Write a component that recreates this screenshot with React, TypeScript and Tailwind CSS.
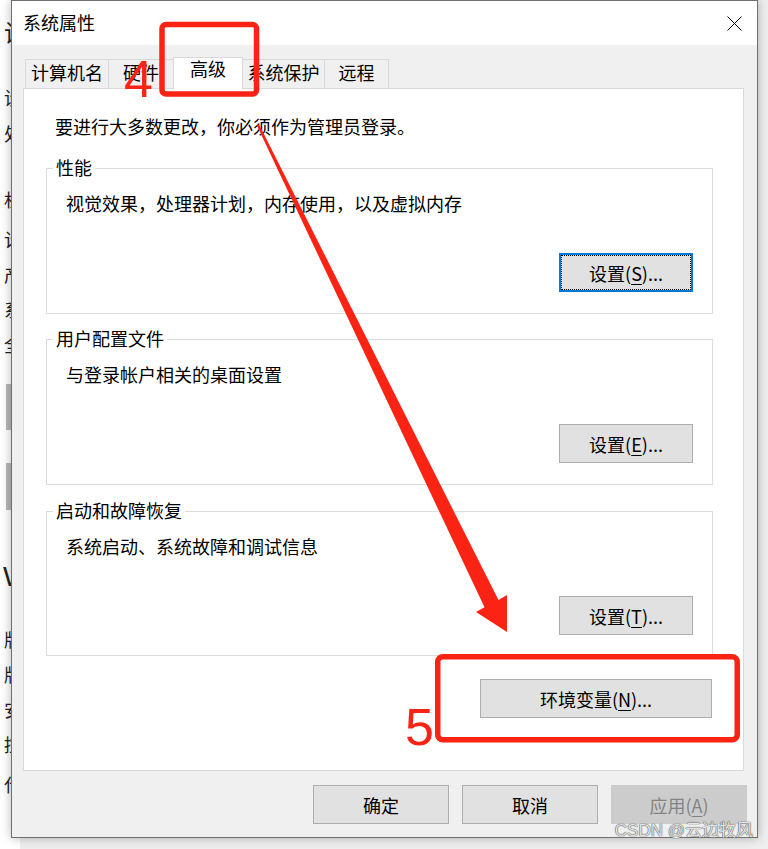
import React from "react";

type BtnProps = {
  label: string;
  mn?: string;
  tail?: string;
  className?: string;
  focused?: boolean;
  disabled?: boolean;
};

function Btn({ label, mn, tail = "", className = "", focused = false, disabled = false }: BtnProps) {
  const look = disabled
    ? "bg-[#cccccc] border border-[#cccccc] text-[#838383]"
    : focused
    ? "bg-[#e1e1e1] border-2 border-[#0078d7] outline outline-1 outline-dotted outline-black -outline-offset-3"
    : "bg-[#e1e1e1] border border-[#adadad]";
  return (
    <div className={`h-[39px] flex items-center justify-center leading-[24px] whitespace-nowrap ${look} ${className}`}>
      <span>{label}</span>
      {mn ? (
        <>
          <span>(</span>
          <span className="underline underline-offset-[3px] decoration-1">{mn}</span>
          <span>)</span>
        </>
      ) : null}
      {tail ? <span>{tail}</span> : null}
    </div>
  );
}

type GroupProps = {
  title: string;
  desc: string;
  btn: React.ReactNode;
  className?: string;
};

function Group({ title, desc, btn, className = "" }: GroupProps) {
  return (
    <div className={`relative w-[667px] border border-[#dcdcdc] ${className}`}>
      <span className="absolute left-[6px] -top-[12px] px-[3px] leading-[20px] bg-white">{title}</span>
      <div className="pt-[22px] pl-[19px] leading-[24px]">{desc}</div>
      <div className="mt-[38px] flex justify-end pr-[19px]">{btn}</div>
    </div>
  );
}

function BackWindow() {
  return (
    <div className="absolute left-0 top-0 w-[20px] h-[849px] bg-white overflow-hidden text-[#222]">
      <div className="absolute left-[4px] top-[18px] text-[24px] leading-[28px]">设</div>
      <div className="absolute left-[4px] top-[86px] leading-[22px]">设</div>
      <div className="absolute left-[4px] top-[122px] leading-[22px]">处</div>
      <div className="absolute left-[4px] top-[188px] leading-[22px]">机</div>
      <div className="absolute left-[4px] top-[228px] leading-[22px]">计</div>
      <div className="absolute left-[4px] top-[263px] leading-[22px]">产</div>
      <div className="absolute left-[4px] top-[298px] leading-[22px]">系</div>
      <div className="absolute left-[4px] top-[333px] leading-[22px]">全</div>
      <div className="absolute left-[6px] top-[384px] w-[10px] h-[46px] bg-[#b9b9b9]" />
      <div className="absolute left-[6px] top-[463px] w-[10px] h-[47px] bg-[#b9b9b9]" />
      <div className="absolute left-[3px] top-[560px] text-[28px] leading-[34px] font-['Liberation_Sans',sans-serif]">W</div>
      <div className="absolute left-[4px] top-[628px] leading-[22px]">版</div>
      <div className="absolute left-[4px] top-[663px] leading-[22px]">版</div>
      <div className="absolute left-[4px] top-[698px] leading-[22px]">安</div>
      <div className="absolute left-[4px] top-[733px] leading-[22px]">控</div>
      <div className="absolute left-[4px] top-[773px] leading-[22px]">代</div>
    </div>
  );
}

export default function App() {
  return (
    <div className="relative w-[768px] h-[849px] overflow-hidden bg-[#efefef] font-['Noto_Sans_CJK_SC','Noto_Sans',sans-serif] text-[18px] text-black">
      <BackWindow />

      {/* dialog window */}
      <div className="absolute left-[11px] top-0 w-[747px] h-[838px] border border-[#6f6f6f] bg-[#f0f0f0] flex flex-col shadow-[0_0_10px_rgba(0,0,0,0.28)]">
        {/* title bar */}
        <div className="h-[44px] shrink-0 bg-white flex items-center justify-between pl-[11px] pr-[15px]">
          <span className="leading-[24px] pb-[3px]">系统属性</span>
          <svg width="15" height="15" viewBox="0 0 15 15" className="block">
            <path d="M0.5 0.5 L14.5 14.5 M14.5 0.5 L0.5 14.5" stroke="#000" strokeWidth="1" fill="none" />
          </svg>
        </div>

        {/* body */}
        <div className="flex-1 flex flex-col pt-[12px] pl-[11px] pr-[13px]">
          {/* tabs */}
          <div className="flex items-end ml-[2px] h-[31px]">
            <div className="w-[84px] h-[29px] border border-b-0 border-[#d9d9d9] bg-[#f0f0f0] flex justify-center leading-[25px]">计算机名</div>
            <div className="-ml-px w-[66px] h-[29px] border border-b-0 border-[#d9d9d9] bg-[#f0f0f0] flex justify-center leading-[25px]">硬件</div>
            <div className="relative z-10 -ml-px -mb-px w-[70px] h-[32px] border border-b-0 border-[#d9d9d9] bg-white flex justify-center leading-[20px]">高级</div>
            <div className="-ml-px w-[83px] h-[29px] border border-b-0 border-[#d9d9d9] bg-[#f0f0f0] flex justify-center leading-[25px]">系统保护</div>
            <div className="-ml-px w-[65px] h-[29px] border border-b-0 border-[#d9d9d9] bg-[#f0f0f0] flex justify-center leading-[25px]">远程</div>
          </div>

          {/* panel */}
          <div className="h-[683px] border border-[#d9d9d9] bg-white px-[22px] pt-[25px] flex flex-col">
            <div className="pl-[9px] leading-[24px]">要进行大多数更改，你必须作为管理员登录。</div>

            <Group
              className="mt-[30px] h-[146px]"
              title="性能"
              desc="视觉效果，处理器计划，内存使用，以及虚拟内存"
              btn={<Btn label="设置" mn="S" tail="..." focused className="w-[134px]" />}
            />
            <Group
              className="mt-[25px] h-[146px]"
              title="用户配置文件"
              desc="与登录帐户相关的桌面设置"
              btn={<Btn label="设置" mn="E" tail="..." className="w-[134px]" />}
            />
            <Group
              className="mt-[26px] h-[145px]"
              title="启动和故障恢复"
              desc="系统启动、系统故障和调试信息"
              btn={<Btn label="设置" mn="T" tail="..." className="w-[134px]" />}
            />

            <div className="w-[667px] mt-[23px] flex justify-end pr-[1px]">
              <Btn label="环境变量" mn="N" tail="..." className="w-[232px]" />
            </div>
          </div>

          {/* bottom buttons */}
          <div className="mt-[14px] flex justify-end gap-[13px] -mr-[3px]">
            <Btn label="确定" className="w-[136px]" />
            <Btn label="取消" className="w-[136px]" />
            <Btn label="应用" mn="A" disabled className="w-[136px]" />
          </div>
        </div>
      </div>

      {/* annotations */}
      <svg className="absolute left-0 top-0 pointer-events-none" width="768" height="849" viewBox="0 0 768 849">
        <rect x="162" y="24.5" width="94.5" height="69.5" rx="4" fill="none" stroke="#fa2314" strokeWidth="5.5" />
        <rect x="437.75" y="656.75" width="299.5" height="83" rx="5" fill="none" stroke="#fa2314" strokeWidth="5.5" />
        <polygon
          points="256.9,125.5 259.1,124.5 498.5,600.1 507,595 507,632 476,612 484.5,607.3"
          fill="#fa2314"
        />
      </svg>
      <div className="absolute left-[124px] top-[53px] text-[52px] leading-[52px] text-[#fa2314] font-['Liberation_Sans',sans-serif]">4</div>
      <div className="absolute left-[405px] top-[701px] text-[52px] leading-[52px] text-[#fa2314] font-['Liberation_Sans',sans-serif]">5</div>

      {/* watermark */}
      <div className="absolute right-[15px] bottom-[8px] text-[17px] leading-[20px] text-[#e4e4e4] font-['Liberation_Sans','Noto_Sans_CJK_SC',sans-serif] [text-shadow:0_0_1px_#333,0_0_1px_#555]">
        CSDN @云边牧风
      </div>
    </div>
  );
}
